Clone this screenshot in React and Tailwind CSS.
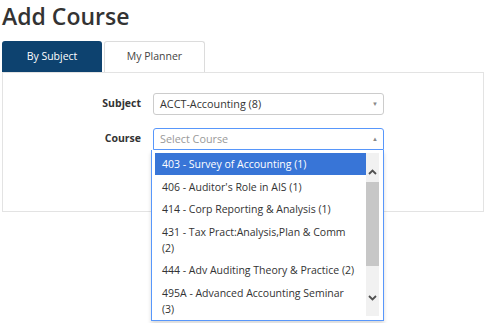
import React from "react";

const items = [
  { t: ["403 - Survey of Accounting (1)"], active: true },
  { t: ["406 - Auditor's Role in AIS (1)"] },
  { t: ["414 - Corp Reporting & Analysis (1)"] },
  { t: ["431 - Tax Pract:Analysis,Plan & Comm", "(2)"] },
  { t: ["444 - Adv Auditing Theory & Practice (2)"] },
  { t: ["495A - Advanced Accounting Seminar", "(3)"] },
];

function Chevron({ up }) {
  return (
    <svg width="9" height="6" viewBox="0 0 9 6">
      <path
        d={up ? "M1 5 L4.5 1.5 L8 5" : "M1 1 L4.5 4.5 L8 1"}
        fill="none"
        stroke="#505050"
        strokeWidth="1.8"
      />
    </svg>
  );
}

export default function App() {
  return (
    <div
      className="relative w-[485px] h-[323px] overflow-hidden bg-white text-[#333]"
      style={{ fontFamily: '"Open Sans", "Liberation Sans", sans-serif' }}
    >
      <h1 className="pl-[2px] pt-[1px] text-[23px] leading-[30px] font-semibold text-[#333]">
        Add Course
      </h1>
      <div className="mt-[10px] flex pl-[2px] gap-[2px]">
        <div className="w-[100px] h-[31px] rounded-t-[3px] bg-[#0d426f] text-white text-[10.5px] flex items-center justify-center">
          By Subject
        </div>
        <div className="w-[101px] h-[31px] rounded-t-[3px] border border-b-0 border-[#dcdcdc] bg-white text-[#444] text-[10.5px] flex items-center justify-center">
          My Planner
        </div>
      </div>
      <div className="ml-[2px] w-[482px] h-[140px] border border-[#e3e3e3] pt-[20px]">
        <div className="flex items-center h-[22px]">
          <div className="w-[138px] text-right text-[10.5px] font-bold text-[#333]">Subject</div>
          <div className="ml-[12px] w-[231px] h-[22px] border border-[#cccccc] rounded-[3px] flex items-center pl-[6px] pr-[5px] text-[10.8px] text-[#333]">
            <span className="flex-1">ACCT-Accounting (8)</span>
            <span className="text-[6px] text-[#888]">▼</span>
          </div>
        </div>
        <div className="flex items-center h-[22px] mt-[13px]">
          <div className="w-[138px] text-right text-[10.5px] font-bold text-[#333]">Course</div>
          <div className="relative ml-[12px] w-[231px] h-[22px] border border-[#5897fb] rounded-t-[3px] flex items-center pl-[6px] pr-[5px] text-[10.8px] text-[#999]">
            <span className="flex-1">Select Course</span>
            <span className="text-[6px] text-[#888]">▲</span>
          </div>
        </div>
      </div>

      <div className="absolute left-[151px] top-[150px] w-[233px] h-[171px] border border-t-0 border-[#5897fb] bg-white shadow-[0_3px_4px_rgba(0,0,0,0.15)] flex pt-[3px] pl-[3px] pr-[4px] pb-[4px]">
        <div className="flex-1 overflow-hidden text-[10.5px] leading-[16px]">
          {items.map((it, i) => (
            <div
              key={i}
              className={
                "pl-[7px] pr-[4px] pt-[3.3px] pb-[3.2px] whitespace-nowrap " +
                (it.active ? "bg-[#3875d7] text-white" : "text-[#333]")
              }
            >
              {it.t.map((line, j) => (
                <div key={j}>{line}</div>
              ))}
            </div>
          ))}
        </div>
        <div className="w-[13px] bg-[#f1f1f1] flex flex-col items-center">
          <div className="h-[29px] flex items-end justify-center pb-[7px]">
            <Chevron up />
          </div>
          <div className="w-[13px] h-[84px] bg-[#c7c7c7]" />
          <div className="flex-1 flex items-end justify-center pb-[15px]">
            <Chevron />
          </div>
        </div>
      </div>
    </div>
  );
}
